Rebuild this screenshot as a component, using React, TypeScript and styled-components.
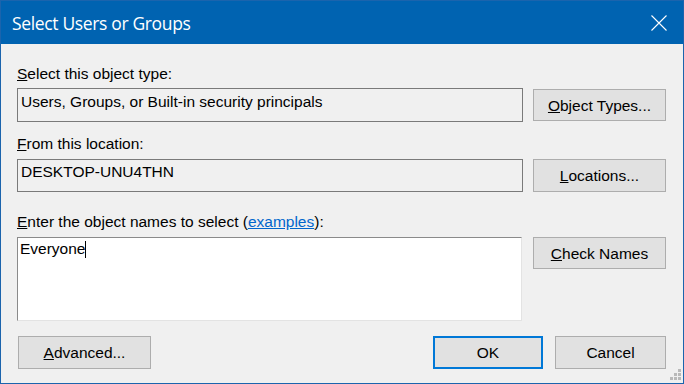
import React from "react";
import styled, { createGlobalStyle } from "styled-components";

const GlobalStyle = createGlobalStyle`
  html, body { margin: 0; padding: 0; background: #f0f0f0; }
  * { box-sizing: border-box; }
`;

const Window = styled.div`
  width: 684px;
  height: 384px;
  border: 1px solid #1b64ad;
  background: #f0f0f0;
  display: flex;
  flex-direction: column;
  font-family: "Liberation Sans", Arial, sans-serif;
  font-size: 15.5px;
  color: #000;
  overflow: hidden;
`;

const TitleBar = styled.div`
  height: 43px;
  flex: none;
  background: #0063b1;
  display: flex;
  align-items: center;
  justify-content: space-between;
  padding: 0 16px 0 11px;
`;

const Title = styled.div`
  font-family: "Open Sans", "Noto Sans", sans-serif;
  font-size: 17.5px;
  letter-spacing: -0.35px;
  color: #fff;
  line-height: 24px;
  margin-top: 1px;
`;

const CloseIcon = styled.svg`
  width: 16px;
  height: 16px;
  display: block;
  margin-top: 1px;
`;

const Content = styled.div`
  flex: 1;
  display: flex;
  flex-direction: column;
  padding: 21px 17px 0 16px;
`;

const Label = styled.div<{ $mt: number; $mb: number }>`
  line-height: 18px;
  height: 18px;
  margin-top: ${(p) => p.$mt}px;
  margin-bottom: ${(p) => p.$mb}px;
  white-space: nowrap;
`;

const Row = styled.div`
  display: grid;
  grid-template-columns: 506px 133px;
  column-gap: 10px;
  align-items: start;
`;

const ReadField = styled.div<{ $h: number; $pt: number }>`
  height: ${(p) => p.$h}px;
  border: 1px solid #7a7a7a;
  background: #f0f0f0;
  padding: ${(p) => p.$pt}px 3px 0 3px;
  line-height: 18px;
  white-space: nowrap;
`;

const NamesBox = styled.div`
  height: 84px;
  width: 505px;
  background: #fff;
  border-style: solid;
  border-width: 1px;
  border-color: #8a8a8a #e3e3e3 #e3e3e3 #8a8a8a;
  padding: 2px 2px 0 2px;
  line-height: 18px;
`;

const Caret = styled.span`
  display: inline-block;
  width: 1px;
  height: 17px;
  background: #000;
  vertical-align: -4px;
`;

const Button = styled.div<{ $h?: number; $mt?: number; $w?: number; $default?: boolean }>`
  height: ${(p) => p.$h ?? 32}px;
  margin-top: ${(p) => p.$mt ?? 0}px;
  width: ${(p) => (p.$w ? `${p.$w}px` : "auto")};
  background: #e1e1e1;
  border: ${(p) => (p.$default ? "2px solid #0078d7" : "1px solid #adadad")};
  display: flex;
  align-items: center;
  justify-content: center;
  padding-top: 1px;
  line-height: 18px;
  white-space: nowrap;
`;

const Footer = styled.div`
  display: flex;
  align-items: center;
  margin-top: 15px;
  padding-left: 1px;
`;

const Spacer = styled.div`
  flex: 1;
`;

const FooterRight = styled.div`
  display: flex;
  gap: 12px;
`;

const Link = styled.span`
  color: #0066cc;
  text-decoration: underline;
`;

const Grip = styled.svg`
  position: absolute;
  right: 3px;
  bottom: 3px;
  width: 12px;
  height: 12px;
`;

const Frame = styled.div`
  position: relative;
  width: 684px;
  height: 384px;
`;

export default function App() {
  return (
    <>
      <GlobalStyle />
      <Frame>
        <Window>
          <TitleBar>
            <Title>Select Users or Groups</Title>
            <CloseIcon viewBox="0 0 16 16">
              <path d="M0.5 0.5 L15.5 15.5 M15.5 0.5 L0.5 15.5" stroke="#fff" strokeWidth="1.1" fill="none" />
            </CloseIcon>
          </TitleBar>
          <Content>
            <Label $mt={0} $mb={5}>
              <u>S</u>elect this object type:
            </Label>
            <Row>
              <ReadField $h={34} $pt={4}>Users, Groups, or Built-in security principals</ReadField>
              <Button $mt={1}>
                <span>
                  <u>O</u>bject Types...
                </span>
              </Button>
            </Row>
            <Label $mt={13} $mb={6}>
              <u>F</u>rom this location:
            </Label>
            <Row>
              <ReadField $h={33} $pt={3}>DESKTOP-UNU4THN</ReadField>
              <Button $h={33}>
                <span>
                  <u>L</u>ocations...
                </span>
              </Button>
            </Row>
            <Label $mt={21} $mb={6}>
              <u>E</u>nter the object names to select (<Link>examples</Link>):
            </Label>
            <Row>
              <NamesBox>
                Everyone
                <Caret />
              </NamesBox>
              <Button>
                <span>
                  <u>C</u>heck Names
                </span>
              </Button>
            </Row>
            <Footer>
              <Button $h={33} $w={133}>
                <span>
                  <u>A</u>dvanced...
                </span>
              </Button>
              <Spacer />
              <FooterRight>
                <Button $h={33} $w={110} $default>
                  OK
                </Button>
                <Button $h={33} $w={111}>
                  Cancel
                </Button>
              </FooterRight>
            </Footer>
          </Content>
        </Window>
        <Grip viewBox="0 0 12 12">
          <g fill="#b9b9b9">
            <rect x="9" y="0" width="3" height="3" />
            <rect x="5" y="4" width="3" height="3" />
            <rect x="9" y="4" width="3" height="3" />
            <rect x="1" y="8" width="3" height="3" />
            <rect x="5" y="8" width="3" height="3" />
            <rect x="9" y="8" width="3" height="3" />
          </g>
        </Grip>
      </Frame>
    </>
  );
}
